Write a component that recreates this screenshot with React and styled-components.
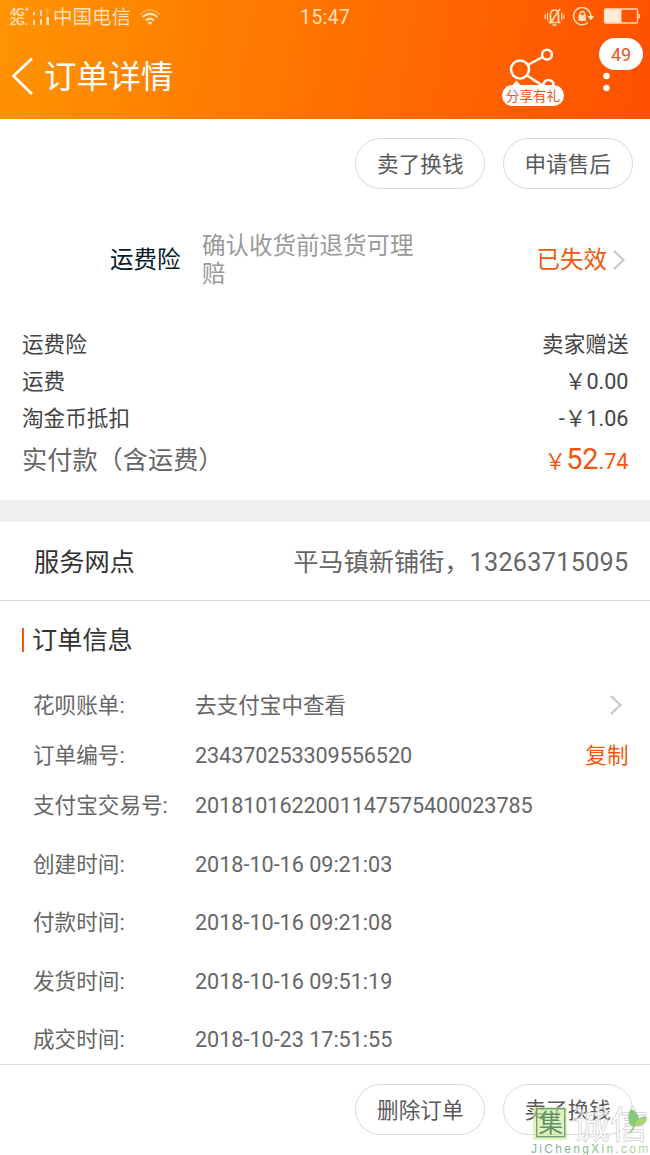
import React from 'react';
import styled, { createGlobalStyle } from 'styled-components';

const GlobalStyle = createGlobalStyle`
  * {
    box-sizing: border-box;
  }
  body {
    margin: 0;
    background: #fff;
    font-family: Roboto, 'Noto Sans CJK SC', sans-serif;
    font-size: 21.6px;
    color: #666;
  }
`;

const Page = styled.div`
  display: flex;
  flex-direction: column;
  width: 650px;
  height: 1155px;
  overflow: hidden;
  white-space: nowrap;
`;

const Header = styled.header`
  height: 119px;
  flex-shrink: 0;
  color: #fff;
  background: linear-gradient(100deg, #ff9402 0%, #ff5000 100%);
`;

const StatusBar = styled.div`
  display: grid;
  grid-template-columns: 1fr auto 1fr;
  align-items: center;
  height: 34px;
  padding: 0 10px 0 10px;
  color: #ffdfb5;
`;

const StatusGroup = styled.div`
  display: flex;
  align-items: center;
  justify-content: ${({ $end }) => ($end ? 'flex-end' : 'flex-start')};
`;

const Network = styled.div`
  width: 21px;
  font-family: 'Liberation Sans', sans-serif;
  font-size: 11.5px;
  font-weight: 700;
  line-height: 9.5px;
  letter-spacing: -0.4px;
`;

const Carrier = styled.span`
  margin: 0 8px 0 1px;
  font-size: 19.5px;
  line-height: 32px;
  padding-top: 2px;
`;

const Clock = styled.span`
  font-size: 19.8px;
  letter-spacing: 0.2px;
`;

const TitleBar = styled.div`
  display: flex;
  align-items: center;
  height: 85px;
  padding-left: 11px;
`;

const Title = styled.h1`
  flex: 1;
  margin: 0 0 0 10px;
  font-size: 32.3px;
  font-weight: 400;
  line-height: 48px;
`;

const Share = styled.div`
  position: relative;
  width: 62px;
  height: 58px;
  margin-right: 35px;
`;

const ShareLabel = styled.span`
  position: absolute;
  left: 0;
  bottom: 0;
  width: 62px;
  height: 21px;
  border-radius: 11px;
  background: #fff;
  color: #e8561c;
  font-size: 13.6px;
  line-height: 22px;
  text-align: center;
`;

const More = styled.div`
  position: relative;
  width: 51px;
  height: 85px;
`;

const Badge = styled.span`
  position: absolute;
  left: 0;
  top: 4px;
  width: 44px;
  height: 32px;
  border-radius: 16px;
  background: #fff;
  color: #e8561c;
  font-size: 18px;
  line-height: 33px;
  text-align: center;
`;

const Actions = styled.div`
  display: flex;
  justify-content: flex-end;
  flex-shrink: 0;
  gap: 17.4px;
  padding: 19px 17.3px 0;
  height: ${({ $footer }) => ($footer ? '91px' : '90px')};
  border-top: ${({ $footer }) => ($footer ? '1px solid #dedede' : '0')};
`;

const PillButton = styled.button`
  width: 130px;
  height: 51px;
  padding: 1px 0 0;
  border: 1px solid #d8d8d8;
  border-radius: 26px;
  background: #fff;
  color: #5a5a5a;
  font: inherit;
  line-height: 50px;
`;

const Insurance = styled.section`
  display: flex;
  align-items: center;
  height: 99px;
  flex-shrink: 0;
  padding: 2px 24px 0 110px;
  font-size: 23.5px;
  line-height: 28px;
`;

const InsuranceName = styled.span`
  width: 92px;
  color: #051b28;
`;

const InsuranceText = styled.p`
  width: 216px;
  margin: 2px 0 0;
  color: #999;
  line-height: 27.6px;
  white-space: normal;
`;

const InsuranceState = styled.span`
  margin: 0 5px 0 auto;
  color: #f0580f;
`;

const Costs = styled.section`
  height: 192px;
  flex-shrink: 0;
  padding: 18px 21.5px 0 22px;
  color: #444;
`;

const CostRow = styled.div`
  display: flex;
  align-items: baseline;
  justify-content: space-between;
  height: 37px;
  line-height: 37px;
`;

const TotalRow = styled(CostRow)`
  height: 46px;
  color: #666;
  font-size: 25.2px;
  line-height: 44px;
`;

const Total = styled.span`
  color: #f0580f;
  font-size: 21.6px;
`;

const TotalInteger = styled.span`
  font-size: 28.8px;
`;

const Divider = styled.div`
  height: 22px;
  flex-shrink: 0;
  background: #f0f0f0;
`;

const Branch = styled.section`
  display: flex;
  justify-content: space-between;
  height: 79px;
  flex-shrink: 0;
  padding: 0 21.5px 0 34px;
  border-bottom: 1px solid #d9d9d9;
  font-size: 25.2px;
  line-height: 81px;
`;

const BranchName = styled.span`
  color: #333;
`;

const Phone = styled.span`
  letter-spacing: 0.3px;
`;

const OrderInfo = styled.section`
  flex: 1;
  min-height: 0;
  padding: 15px 21.5px 0 22px;
`;

const SectionTitle = styled.h2`
  display: flex;
  align-items: center;
  height: 50px;
  margin: 0 0 15px;
  color: #333;
  font-size: 25.2px;
  font-weight: 400;
  line-height: 52px;

  &::before {
    content: '';
    width: 2px;
    height: 24px;
    margin: -2px 8px 0 0;
    background: #f0580f;
  }
`;

const InfoRow = styled.div`
  display: flex;
  height: 50px;
  padding-left: 11px;
  line-height: 50px;
`;

const TimeRow = styled(InfoRow)`
  height: 58.4px;
  line-height: 58.4px;
`;

const Times = styled.div`
  padding-top: 5px;
`;

const InfoLabel = styled.span`
  width: 162px;
`;

const InfoNumber = styled.span`
  letter-spacing: ${({ $loose }) => ($loose ? '-0.02px' : '-0.08px')};
`;

const Copy = styled.span`
  margin-left: auto;
  color: #f0580f;
`;

const ArrowSlot = styled.span`
  display: flex;
  align-items: center;
  margin: -3px 6px 0 auto;
`;

const Watermark = styled.div`
  position: absolute;
  left: 529px;
  top: 1104px;
  width: 121px;
  height: 51px;
  overflow: hidden;
`;

const Arrow = () => (
  <svg width="14" height="20" viewBox="0 0 14 20" fill="none">
    <path d="M2 1 11.5 10 2 19" stroke="#c8c8c8" strokeWidth="2.2" />
  </svg>
);

const SignalIcon = () => (
  <svg width="21" height="20" viewBox="0 0 21 20" fill="#ffdfb5">
    <path d="M2 5h2v3H2zM2 13h2v5H2zM9 3h2v6H9zM9 12h2v6H9z" />
    <path d="M15.5 1h2v7h-2z" opacity=".4" />
    <path d="M15.5 10H18v8h-2.500z" />
  </svg>
);

const WifiIcon = () => (
  <svg width="22" height="17" viewBox="0 0 22 17" fill="none" stroke="#ffdfb5">
    <path d="M1 5.5Q11-3.5 21 5.5" strokeWidth="1.5" opacity=".45" />
    <path d="M3.5 8Q11 1.5 18.5 8M7 11.5Q11 8 15 11.5" strokeWidth="2.3" />
    <path d="m8.5 13.5 2.5 2.5 2.5-2.5q-2.5-1.7-5 0Z" fill="#ffdfb5" stroke="none" />
  </svg>
);

const StatusIcons = () => (
  <svg width="97" height="20" viewBox="0 0 97 20" fill="none" stroke="#ffdfb5">
    <path d="M5.5 15.5h12M7.500 15V8q0-5 4-5t4 5v7M7 16.500 17 2M9.500 18h4" strokeWidth="1.7" />
    <path d="M4.500 5.500v8M2.200 7.500v4.500M18.800 5.500v8M21 7.500v4.500" strokeWidth="1.2" />
    <path d="M45 15.500A8.600 8.600 0 1 1 47.800 9" strokeWidth="1.5" />
    <path d="m44.4 9 7-.1-3.500 4.600Z" fill="#ffdfb5" stroke="none" />
    <path d="M35.500 8h7.500v6h-7.500z" fill="#ffdfb5" stroke="none" />
    <path d="M37 8.500V6.800q0-2.300 2.300-2.300t2.300 2.300v1.700" strokeWidth="1.5" />
    <rect x="61.5" y="2" width="33" height="14" rx="1" strokeWidth="1.3" />
    <path d="M61.500 2.500h17v13h-17z" fill="#ffe9d8" stroke="none" />
    <path d="M96 7v4.500" strokeWidth="1.6" />
  </svg>
);

const BackIcon = () => (
  <svg width="23" height="40" viewBox="0 0 23 40" fill="none">
    <path d="M21 1.5 2.5 19 21 37" stroke="#fff" strokeWidth="2.6" />
  </svg>
);

const ShareIcon = () => (
  <svg width="62" height="58" viewBox="0 0 62 58" fill="none" stroke="#fff" strokeWidth="2.5">
    <circle cx="18" cy="21.5" r="9" />
    <circle cx="45" cy="6.7" r="4.9" />
    <circle cx="46.5" cy="37" r="5" />
    <path d="M26 17 40.5 9M25 27.5 42 38.5" />
    <path d="m10 38 4.5-5.5 4.5 5.5Z" fill="#fff" stroke="none" />
  </svg>
);

const DotsIcon = () => (
  <svg width="16" height="85" viewBox="0 0 16 85" fill="#fff">
    <circle cx="7.5" cy="42" r="3.2" />
    <circle cx="7.5" cy="54" r="3.2" />
  </svg>
);

const WatermarkArt = () => (
  <svg width="121" height="51" viewBox="0 0 121 51">
    <path d="M4 3h34v33H4z" fill="#cdea92" opacity=".6" />
    <rect x="7.7" y="4.700" width="28" height="28" fill="none" stroke="#6fa276" strokeWidth="1.4" />
    <text x="9.5" y="28" fontSize="24.5" fill="#5d9360">集</text>
    <text x="43" y="34" fontSize="38" fill="#fff" fillOpacity=".6" stroke="#d6d3d6" strokeWidth=".8">诚信</text>
    <path d="M101 21q-4-10 1-16 7 3 8 10 6-5 8-1-1 8-12 8-2 6-8 9 5-5 6-9Z" fill="#86c77b" />
    <path d="M105 21q4-8 13-7-2 8-13 7Z" fill="#a9d86d" />
    <text x="2" y="48.5" fontSize="12" letterSpacing="2.3" fontFamily="Liberation Sans, sans-serif" fill="url(#site)">
      JiChengXin.com
    </text>
    <defs>
      <linearGradient id="site">
        <stop offset="0" stopColor="#7db4b3" />
        <stop offset=".5" stopColor="#83bb81" />
        <stop offset="1" stopColor="#bcd892" />
      </linearGradient>
    </defs>
  </svg>
);

const costs = [
  ['运费险', '卖家赠送'],
  ['运费', '￥0.00'],
  ['淘金币抵扣', '-￥1.06'],
];

const times = [
  ['创建时间:', '2018-10-16 09:21:03'],
  ['付款时间:', '2018-10-16 09:21:08'],
  ['发货时间:', '2018-10-16 09:51:19'],
  ['成交时间:', '2018-10-23 17:51:55'],
];

const App = () => {
  return (
    <>
      <GlobalStyle />
      <Page lang="zh-CN">
        <Header>
          <StatusBar>
            <StatusGroup>
              <Network>
                4G⁺
                <br />
                2G.
              </Network>
              <SignalIcon />
              <Carrier>中国电信</Carrier>
              <WifiIcon />
            </StatusGroup>
            <Clock>15:47</Clock>
            <StatusGroup $end>
              <StatusIcons />
            </StatusGroup>
          </StatusBar>
          <TitleBar>
            <BackIcon />
            <Title>订单详情</Title>
            <Share>
              <ShareIcon />
              <ShareLabel>分享有礼</ShareLabel>
            </Share>
            <More>
              <DotsIcon />
              <Badge>49</Badge>
            </More>
          </TitleBar>
        </Header>

        <Actions>
          <PillButton>卖了换钱</PillButton>
          <PillButton>申请售后</PillButton>
        </Actions>

        <Insurance>
          <InsuranceName>运费险</InsuranceName>
          <InsuranceText>确认收货前退货可理赔</InsuranceText>
          <InsuranceState>已失效</InsuranceState>
          <Arrow />
        </Insurance>

        <Costs>
          {costs.map(([label, value]) => (
            <CostRow key={label}>
              <span>{label}</span>
              <span>{value}</span>
            </CostRow>
          ))}
          <TotalRow>
            <span>实付款（含运费）</span>
            <Total>
              ￥<TotalInteger>52</TotalInteger>.74
            </Total>
          </TotalRow>
        </Costs>

        <Divider />

        <Branch>
          <BranchName>服务网点</BranchName>
          <span>
            平马镇新铺街，<Phone>13263715095</Phone>
          </span>
        </Branch>

        <OrderInfo>
          <SectionTitle>订单信息</SectionTitle>
          <InfoRow>
            <InfoLabel>花呗账单:</InfoLabel>
            <span>去支付宝中查看</span>
            <ArrowSlot>
              <Arrow />
            </ArrowSlot>
          </InfoRow>
          <InfoRow>
            <InfoLabel>订单编号:</InfoLabel>
            <InfoNumber>234370253309556520</InfoNumber>
            <Copy>复制</Copy>
          </InfoRow>
          <InfoRow>
            <InfoLabel>支付宝交易号:</InfoLabel>
            <InfoNumber>2018101622001147575400023785</InfoNumber>
          </InfoRow>
          <Times>
            {times.map(([label, value]) => (
              <TimeRow key={label}>
                <InfoLabel>{label}</InfoLabel>
                <InfoNumber $loose>{value}</InfoNumber>
              </TimeRow>
            ))}
          </Times>
        </OrderInfo>

        <Actions $footer>
          <PillButton>删除订单</PillButton>
          <PillButton>卖了换钱</PillButton>
        </Actions>
      </Page>
      <Watermark>
        <WatermarkArt />
      </Watermark>
    </>
  );
};

export default App;
